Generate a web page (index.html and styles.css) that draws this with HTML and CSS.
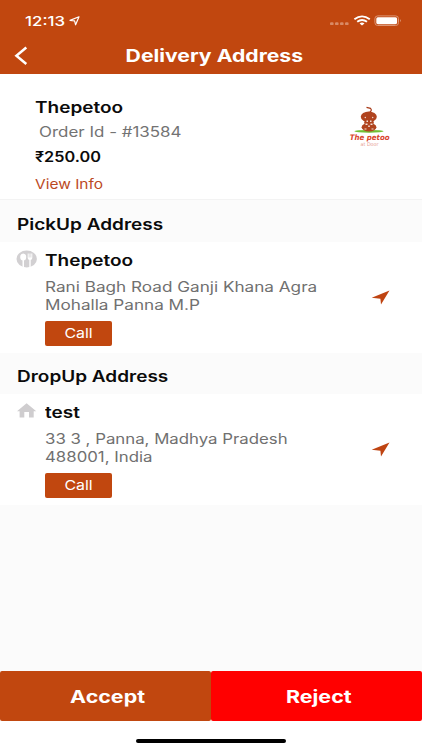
FILE: index.html
```
<!DOCTYPE html>
<html lang="en">
<head>
<meta charset="utf-8">
<title>Delivery Address</title>
<link rel="stylesheet" href="styles.css">
</head>
<body>
<div class="app">
  <header class="header">
    <div class="status">
      <span class="wide time">12:13</span>
      <svg class="loc" width="12" height="10" viewBox="0 0 12 10"><path d="M1 4.4 L10 .8 L6.6 8.8 L5.6 4.8 Z" fill="none" stroke="#fff" stroke-width="1.2" stroke-linejoin="round"/></svg>
      <svg class="sys" width="76" height="12" viewBox="0 0 76 12">
        <g fill="#d98a65"><rect x="1" y="7.3" width="3.6" height="2.8" rx="1.2"/><rect x="6" y="7.3" width="3.6" height="2.8" rx="1.2"/><rect x="11" y="7.3" width="3.6" height="2.8" rx="1.2"/><rect x="16" y="7.3" width="3.6" height="2.8" rx="1.2"/></g>
        <g fill="none" stroke="#fff" stroke-width="1.9"><path d="M25.4 4.3 Q33 -1.5 40.8 4.3"/><path d="M28.2 6.8 Q33 3.2 38 6.8"/></g>
        <path d="M30.6 8.4 Q33 6.8 35.5 8.4 L33 10.5 Z" fill="#fff"/>
        <rect x="45.9" y=".9" width="23.6" height="9.6" rx="2.8" fill="none" stroke="#dc9473" stroke-width="1"/>
        <rect x="47.3" y="2.2" width="20.8" height="7" rx="1.6" fill="#fff"/>
        <path d="M71 4 Q72.4 5.6 71 7.3Z" fill="#e7b7a0"/>
      </svg>
    </div>
    <div class="nav">
      <svg class="back" width="14" height="20" viewBox="0 0 14 20"><path d="M12.3 1.5 L2.4 9.7 L12.3 18" fill="none" stroke="#fff" stroke-width="2.5"/></svg>
      <h1 class="title"><span class="wide mid">Delivery Address</span></h1>
    </div>
  </header>

  <section class="order">
    <div class="details">
      <div class="name"><span class="wide">Thepetoo</span></div>
      <div class="order-id"><span class="wide narrower">Order Id - #13584</span></div>
      <div class="price"><span class="wide">₹250.00</span></div>
      <div class="info"><span class="wide narrower">View Info</span></div>
    </div>
    <svg class="logo" width="50" height="50" viewBox="0 0 50 50">
      <ellipse cx="24" cy="29.3" rx="14.5" ry="1.4" fill="#72bf35"/>
      <path d="M24.5 10.5 Q27.5 8.5 25.5 6.3 L21.5 5.3" fill="none" stroke="#a83a18" stroke-width="1.2"/>
      <ellipse cx="23.8" cy="14.8" rx="8" ry="5.4" fill="#b0441f"/>
      <ellipse cx="24" cy="20.5" rx="4.8" ry="4" fill="#b0441f"/>
      <ellipse cx="24" cy="25.2" rx="7.4" ry="4.2" fill="#b0441f"/>
      <g fill="#f3dfd8"><circle cx="20.3" cy="15.5" r=".7"/><circle cx="27.7" cy="15.5" r=".7"/><path d="M21.5 18.500h1.500v1.500h-1.500zM25 18.500h1.500v1.500H25zM20.500 21.500h2v1.500h-2zM25.500 21.500h2v1.500h-2zM23.200 23.500h1.600v1.500h-1.600zM19.500 26.500h2v1h-2zM26.500 26.500h2v1h-2z"/></g>
      <text class="brand" x="4.8" y="38.3" textLength="39.8" lengthAdjust="spacingAndGlyphs">The petoo</text>
      <text class="tagline" x="15.5" y="44.3" textLength="18" lengthAdjust="spacingAndGlyphs">at Door</text>
    </svg>
  </section>

  <h2 class="heading"><span class="wide">PickUp Address</span></h2>
  <section class="address">
    <svg class="kind" width="22" height="20" viewBox="0 0 22 20"><ellipse cx="10.7" cy="8.9" rx="10.2" ry="8.5" fill="#d2d0d2"/><ellipse cx="7.2" cy="7" rx="3" ry="3.6" fill="#fff"/><path d="M6.500 10h1.500v7H6.500zM11.700 3.500h1v4h.8v-4h1v4h.8v-4h1V8q0 1.700-1.600 2v7h-1.400v-7q-1.600-.3-1.600-2Z" fill="#fff"/></svg>
    <div class="place">
      <div class="name"><span class="wide">Thepetoo</span></div>
      <p class="lines"><span class="wide">Rani Bagh Road Ganji Khana Agra<br>Mohalla Panna M.P</span></p>
      <button class="call"><span class="wide mid">Call</span></button>
    </div>
    <svg class="go" width="20" height="16" viewBox="0 0 20 16"><path d="M.7 7.7 L18.5 .4 L10 14.6 L9.4 8.8Z" fill="#bf4412"/></svg>
  </section>

  <h2 class="heading"><span class="wide">DropUp Address</span></h2>
  <section class="address">
    <svg class="kind home" width="22" height="20" viewBox="0 0 22 20"><path d="M10.600 .2 L20.300 8.200H17.700V14.500H13V9H8.300V14.500H3.600V8.200H1Z" fill="#cfcdcf"/></svg>
    <div class="place">
      <div class="name"><span class="wide">test</span></div>
      <p class="lines"><span class="wide narrower">33 3 , Panna, Madhya Pradesh<br>488001, India</span></p>
      <button class="call"><span class="wide mid">Call</span></button>
    </div>
    <svg class="go" width="20" height="16" viewBox="0 0 20 16"><path d="M.7 7.7 L18.5 .4 L10 14.6 L9.4 8.8Z" fill="#bf4412"/></svg>
  </section>

  <div class="spacer"></div>
  <footer class="footer">
    <div class="actions">
      <button class="accept"><span class="wide mid">Accept</span></button>
      <button class="reject"><span class="wide mid">Reject</span></button>
    </div>
    <div class="indicator"></div>
  </footer>
</div>
</body>
</html>
```
FILE: styles.css
```
* { box-sizing: border-box; }
body { margin: 0; font-family: Inter, "Liberation Sans", sans-serif; color: #0b0b0b; background: #fff; }
svg { display: block; flex: none; overflow: visible; }
h1, h2, p { margin: 0; }
button { border: 0; padding: 0; font: inherit; color: #fff; }

.app { width: 422px; height: 750px; display: flex; flex-direction: column; overflow: hidden; background: #fbfbfb; }

/* Extended letterforms */
.wide { display: inline-block; white-space: nowrap; transform: scaleX(1.225); transform-origin: left center; }
.wide.mid { transform-origin: center; }
.wide.narrower { transform: scaleX(1.2); }

.header { height: 74px; background: #c1470f; color: #fff; }
.status { display: flex; height: 42px; padding: 12px 17px 0 25px; }
.time { width: 44px; font-size: 13.5px; font-weight: 500; line-height: 18px; }
.time.wide { transform: scaleX(1.25); }
.loc { margin-top: 4px; }
.sys { margin: 3px 0 0 auto; }
.nav { display: flex; height: 28px; padding-left: 14px; }
.back { margin-top: 4px; }
.title { width: 372px; text-align: center; font-size: 17.5px; font-weight: 700; line-height: 28px; }
.title .wide { transform: scaleX(1.21); }

.order { display: flex; height: 126px; padding: 25px 27px 0 35px; background: #fff; border-bottom: 1px solid #f3f3f3; }
.details { flex: 1; line-height: 18px; }
.name { height: 25px; font-size: 15.5px; font-weight: 600; line-height: 18px; }
.order .name { height: 24px; }
.order-id { height: 25px; padding-left: 4px; font-size: 14px; color: #737373; }
.price { height: 27px; font-size: 14px; font-weight: 600; }
.price .wide { transform: scaleX(1.16); }
.info { font-size: 13px; color: #bb4a1f; }
.order-id .wide { transform: scaleX(1.21); }
.info .wide { transform: scaleX(1.19); }
.logo { margin-top: 3px; }
.brand { font: italic 700 7.5px "DejaVu Sans", sans-serif; fill: #d9432b; }
.tagline { font: 5px "DejaVu Sans", sans-serif; fill: #e79a90; }

.heading { height: 42px; padding: 16px 17px 0; font-size: 15.5px; font-weight: 600; line-height: 18px; }
.address { display: flex; height: 110px; padding: 10px 31px 0 16px; background: #fff; box-shadow: 0 1px #fff; }
.kind { margin-top: -2px; }
.kind.home { margin-top: -1px; }
.place { flex: 1; padding-left: 7px; }
.name + .lines { padding-top: 1px; }
.lines { height: 44px; font-size: 14px; line-height: 18.4px; color: #707070; }
.call { display: block; width: 67px; height: 25px; border-radius: 2px; background: #c1470f; font-size: 13px; line-height: 25px; }
.go { margin-top: 38px; }

.spacer { flex: 1; }
.footer { height: 79px; background: #fff; }
.actions { display: flex; height: 50px; }
.accept, .reject { flex: 1; padding-left: 5px; font-size: 17.5px; font-weight: 700; border-radius: 2px; }
.accept { background: #c1470f; }
.reject { background: #f00; }
.indicator { width: 150px; height: 4px; margin: 18px auto 0; border-radius: 2px; background: #000; }
```
